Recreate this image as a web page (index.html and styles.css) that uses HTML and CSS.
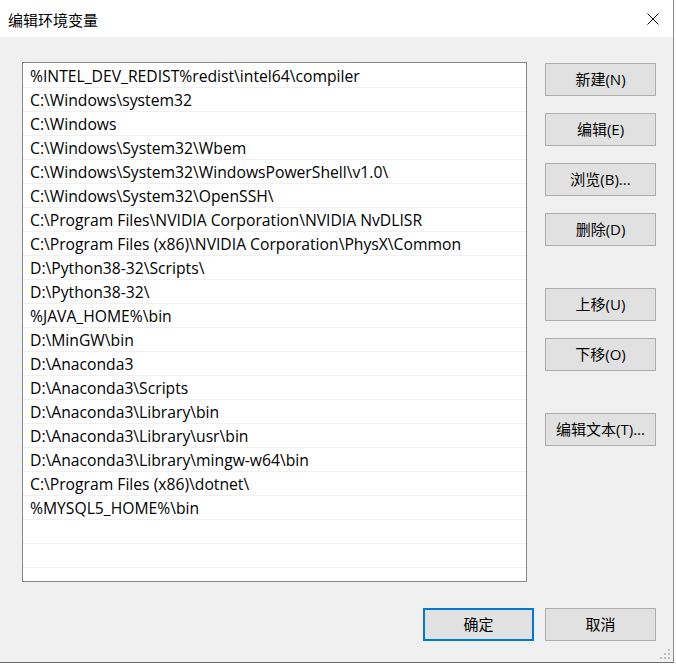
FILE: index.html
```html
<!DOCTYPE html>
<html lang="zh-CN">
<head>
<meta charset="utf-8">
<title>编辑环境变量</title>
<link rel="stylesheet" href="styles.css">
</head>
<body>
<div class="window">
  <div class="titlebar">
    <span class="title">编辑环境变量</span>
    <svg class="close" width="12" height="12" viewBox="0 0 12 12"><path d="M0.5 0.5 L11.5 11.5 M11.5 0.5 L0.5 11.5" stroke="#000" stroke-width="1" fill="none"/></svg>
  </div>
  <div class="content">
    <div class="main">
      <div class="list">
        <div class="row">%INTEL_DEV_REDIST%redist\intel64\compiler</div>
        <div class="row">C:\Windows\system32</div>
        <div class="row">C:\Windows</div>
        <div class="row">C:\Windows\System32\Wbem</div>
        <div class="row">C:\Windows\System32\WindowsPowerShell\v1.0\</div>
        <div class="row">C:\Windows\System32\OpenSSH\</div>
        <div class="row">C:\Program Files\NVIDIA Corporation\NVIDIA NvDLISR</div>
        <div class="row">C:\Program Files (x86)\NVIDIA Corporation\PhysX\Common</div>
        <div class="row">D:\Python38-32\Scripts\</div>
        <div class="row">D:\Python38-32\</div>
        <div class="row">%JAVA_HOME%\bin</div>
        <div class="row">D:\MinGW\bin</div>
        <div class="row">D:\Anaconda3</div>
        <div class="row">D:\Anaconda3\Scripts</div>
        <div class="row">D:\Anaconda3\Library\bin</div>
        <div class="row">D:\Anaconda3\Library\usr\bin</div>
        <div class="row">D:\Anaconda3\Library\mingw-w64\bin</div>
        <div class="row">C:\Program Files (x86)\dotnet\</div>
        <div class="row">%MYSQL5_HOME%\bin</div>
        <div class="row"></div>
        <div class="row"></div>
        <div class="row"></div>
      </div>
      <div class="side">
        <button class="btn">新建(N)</button>
        <button class="btn">编辑(E)</button>
        <button class="btn">浏览(B)...</button>
        <button class="btn">删除(D)</button>
        <button class="btn group">上移(U)</button>
        <button class="btn">下移(O)</button>
        <button class="btn group">编辑文本(T)...</button>
      </div>
    </div>
    <div class="footer">
      <button class="btn default">确定</button>
      <button class="btn">取消</button>
    </div>
  </div>
  <div class="grip">
    <i class="d d1"></i>
    <i class="d d2"></i><i class="d d3"></i>
    <i class="d d4"></i><i class="d d5"></i><i class="d d6"></i>
  </div>
</div>
</body>
</html>
```
FILE: styles.css
```css
* { box-sizing: border-box; }
html, body { margin: 0; padding: 0; background: #ffffff; }
body {
  font-family: "Open Sans", "Noto Sans CJK SC", sans-serif;
  font-size: 15.7px;
  color: #000;
}
.window {
  position: relative;
  width: 674px;
  height: 663px;
  background: #f0f0f0;
  border-right: 1px solid #8a8a8a;
  border-bottom: 1px solid #6e6e6e;
  display: flex;
  flex-direction: column;
}
.titlebar {
  height: 37px;
  background: #ffffff;
  display: flex;
  align-items: center;
  justify-content: space-between;
  padding-left: 8px;
  padding-right: 14px;
}
.title {
  font-family: "Noto Sans CJK SC", sans-serif;
  font-size: 15px;
  line-height: 1;
  padding-top: 1px;
}
.close { display: block; margin-top: 0; }
.content {
  padding: 25px 17px 0 22px;
  display: flex;
  flex-direction: column;
}
.main {
  display: flex;
  align-items: flex-start;
}
.list {
  width: 505px;
  height: 520px;
  background: #ffffff;
  border: 1px solid #828790;
  padding-top: 1px;
  overflow: hidden;
}
.row {
  height: 24px;
  border-bottom: 1px solid #f0f0f0;
  padding-left: 7px;
  padding-top: 1px;
  line-height: 22px;
  white-space: nowrap;
}
.side {
  margin-left: 18px;
  margin-top: 1px;
  width: 111px;
  display: flex;
  flex-direction: column;
  gap: 17px;
}
.side .group { margin-top: 25px; }
.btn {
  width: 111px;
  height: 33px;
  margin: 0;
  padding: 0;
  background: #e1e1e1;
  border: 1px solid #adadad;
  font-family: "Open Sans", "Noto Sans CJK SC", sans-serif;
  font-size: 15px;
  color: #000;
  text-align: center;
  line-height: 31px;
}
.btn.default {
  border: 2px solid #0078d7;
  line-height: 29px;
}
.footer {
  margin-top: 26px;
  display: flex;
  justify-content: flex-end;
  gap: 11px;
}
.grip {
  position: absolute;
  right: 3px;
  bottom: 3px;
  width: 10px;
  height: 10px;
}
.d {
  position: absolute;
  width: 2px;
  height: 2px;
  background: #bdbdbd;
}
.d1 { left: 8px; top: 0; }
.d2 { left: 4px; top: 4px; }
.d3 { left: 8px; top: 4px; }
.d4 { left: 0; top: 8px; }
.d5 { left: 4px; top: 8px; }
.d6 { left: 8px; top: 8px; }
```
